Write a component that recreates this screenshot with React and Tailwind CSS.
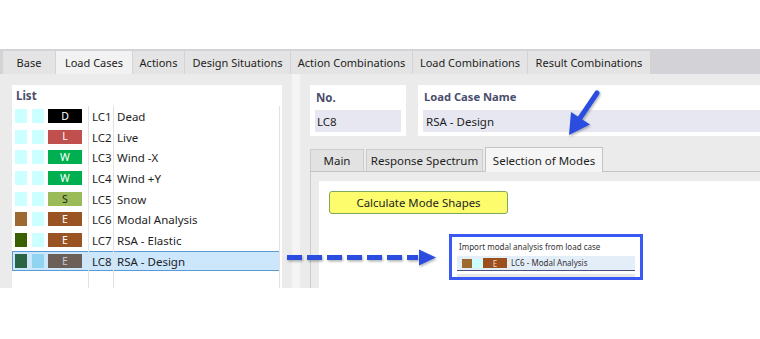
import React from "react";

const font = { fontFamily: '"Noto Sans", "Open Sans", sans-serif' };

const mainTabs = [
  { label: "Base", w: "w-[52px]" },
  { label: "Load Cases", w: "w-[76px]", active: true },
  { label: "Actions", w: "w-[51px]" },
  { label: "Design Situations", w: "w-[105px]" },
  { label: "Action Combinations", w: "w-[121px]" },
  { label: "Load Combinations", w: "w-[114px]" },
  { label: "Result Combinations", w: "w-[122px]" },
];

const loadCases = [
  { s1: "bg-[#ccffff]", s2: "bg-[#ccffff]", code: "D", box: "bg-[#000000] text-white", no: "LC1", name: "Dead" },
  { s1: "bg-[#ccffff]", s2: "bg-[#ccffff]", code: "L", box: "bg-[#c0504d] text-white", no: "LC2", name: "Live" },
  { s1: "bg-[#ccffff]", s2: "bg-[#ccffff]", code: "W", box: "bg-[#00b050] text-white", no: "LC3", name: "Wind -X" },
  { s1: "bg-[#ccffff]", s2: "bg-[#ccffff]", code: "W", box: "bg-[#00b050] text-white", no: "LC4", name: "Wind +Y" },
  { s1: "bg-[#ccffff]", s2: "bg-[#ccffff]", code: "S", box: "bg-[#9bbb59] text-[#222]", no: "LC5", name: "Snow" },
  { s1: "bg-[#9c6a30]", s2: "bg-[#ccffff]", code: "E", box: "bg-[#9a5424] text-white", no: "LC6", name: "Modal Analysis" },
  { s1: "bg-[#386000]", s2: "bg-[#ccffff]", code: "E", box: "bg-[#9a5424] text-white", no: "LC7", name: "RSA - Elastic" },
  { s1: "bg-[#2b6444]", s2: "bg-[#90d4f0]", code: "E", box: "bg-[#6b5f57] text-[#c4c6dc]", no: "LC8", name: "RSA - Design", selected: true },
];

function ListRow({ lc }) {
  return (
    <div
      className={`flex h-[20.7px] items-stretch ${
        lc.selected ? "bg-[#cce6fb] ring-1 ring-inset ring-[#5b9bd5]" : ""
      }`}
    >
      <div className="w-[77px] flex items-center pl-[3px] border-r border-[#e2e2e2]">
        <span className={`w-[12px] h-[14px] ${lc.s1}`} />
        <span className={`w-[12px] h-[14px] ml-[5px] ${lc.s2}`} />
        <span
          className={`w-[34px] h-[14px] ml-[4px] flex items-center justify-center text-[10.5px] leading-none ${lc.box}`}
        >
          {lc.code}
        </span>
      </div>
      <div className="w-[25px] flex items-center pl-[3px] pt-[1px] border-r border-[#e2e2e2] text-[11.5px] text-[#1e1e1e] whitespace-nowrap">
        {lc.no}
      </div>
      <div className="flex-1 flex items-center pl-[3px] pt-[1px] border-r border-[#e2e2e2] text-[11.5px] text-[#1e1e1e] whitespace-nowrap">
        {lc.name}
      </div>
    </div>
  );
}

function Annotations() {
  return (
    <svg
      className="absolute left-0 top-0 pointer-events-none"
      width="760"
      height="339"
      viewBox="0 0 760 339"
    >
      <defs>
        <filter id="sh" x="-20%" y="-20%" width="140%" height="140%">
          <feDropShadow dx="1" dy="1.5" stdDeviation="1.2" floodColor="#000" floodOpacity="0.3" />
        </filter>
      </defs>
      <g filter="url(#sh)">
        <line x1="597" y1="93" x2="578" y2="121" stroke="#2c4ee0" strokeWidth="5" strokeLinecap="round" />
        <polygon points="569,135 571,112 590,124.5" fill="#2c4ee0" />
      </g>
      <g filter="url(#sh)">
        <line x1="287" y1="257.5" x2="418" y2="257.5" stroke="#2c4ee0" strokeWidth="5" strokeDasharray="15 5" />
        <polygon points="419,249.5 436,257.5 419,265.5" fill="#2c4ee0" />
      </g>
    </svg>
  );
}

export default function App() {
  return (
    <div className="relative w-[760px] h-[339px] bg-white overflow-hidden" style={font}>
      <div className="pt-[49px]">
        <div className="h-[239px] flex flex-col">
          {/* main tab bar */}
          <div className="h-[25px] bg-[#d2d2d7] flex items-end pl-[3px] gap-[1px]">
            {mainTabs.map((t) => (
              <div
                key={t.label}
                className={`${t.w} h-[23px] pt-[2px] flex items-center justify-center text-[11px] text-[#1e1e1e] whitespace-nowrap ${
                  t.active ? "bg-[#f2f2f2]" : "bg-[#e4e4e4]"
                }`}
              >
                {t.label}
              </div>
            ))}
          </div>

          {/* body */}
          <div className="flex-1 flex bg-[#ebebeb]">
            {/* list panel */}
            <div className="w-[282px] pl-[12px] pt-[11px] flex">
              <div className="flex-1 bg-white flex flex-col pr-[2px]">
                <div className="h-[20.7px] flex items-center pl-[4px] text-[11.5px] font-bold text-[#4a4e6c]">
                  List
                </div>
                {loadCases.map((lc) => (
                  <ListRow key={lc.no} lc={lc} />
                ))}
                <div className="flex-1 flex">
                  <div className="w-[77px] border-r border-[#e2e2e2]" />
                  <div className="w-[25px] border-r border-[#e2e2e2]" />
                  <div className="flex-1 border-r border-[#e2e2e2]" />
                </div>
              </div>
            </div>

            {/* splitter */}
            <div className="w-[28px] flex pl-[10px]">
              <div className="w-[8px] bg-[#f4f4f4]" />
            </div>

            {/* right panel */}
            <div className="flex-1 flex flex-col pt-[11px]">
              <div className="flex gap-[12px] h-[51px]">
                <div className="w-[96px] bg-white flex flex-col px-[5px]">
                  <div className="h-[25px] flex items-center pl-[1px] text-[11.5px] font-bold text-[#4a4e6c]">
                    No.
                  </div>
                  <div className="h-[22px] bg-[#e7e7f1] flex items-center pl-[2px] pt-[1px] text-[11.5px] text-[#1e1e1e]">
                    LC8
                  </div>
                </div>
                <div className="flex-1 bg-white flex flex-col pl-[5px]">
                  <div className="h-[25px] flex items-center pl-[1px] text-[11.2px] font-bold text-[#4a4e6c]">
                    Load Case Name
                  </div>
                  <div className="h-[22px] bg-[#e7e7f1] flex items-center pl-[3px] pt-[1px] text-[11.5px] text-[#1e1e1e]">
                    RSA - Design
                  </div>
                </div>
              </div>

              {/* sub tabs */}
              <div className="mt-[11px] h-[25px] flex items-end gap-[2px] border-b border-[#c4c4c4]">
                <div className="w-[54px] h-[22px] pt-[1px] bg-[#e2e2e2] border border-b-0 border-[#cdcdcd] flex items-center justify-center text-[11.5px] text-[#1e1e1e] whitespace-nowrap">
                  Main
                </div>
                <div className="w-[117px] h-[22px] pt-[1px] bg-[#e2e2e2] border border-b-0 border-[#cdcdcd] flex items-center justify-center text-[11.5px] text-[#1e1e1e] whitespace-nowrap">
                  Response Spectrum
                </div>
                <div className="w-[118px] h-[25px] -mb-[1px] pt-[1px] bg-[#f5f5f5] border border-b-0 border-[#c4c4c4] flex items-center justify-center text-[11.5px] text-[#1e1e1e] whitespace-nowrap">
                  Selection of Modes
                </div>
              </div>

              <div className="flex-1 flex flex-col border-l border-[#cdcdcd] pl-[8px] pt-[9px] bg-[#ebebeb]">
                <div className="flex-1 bg-white pl-[10px] pt-[10px] flex flex-col">
                  <div className="w-[179px] h-[23px] rounded-[3px] border border-[#7fa85c] bg-[#fcfc6c] flex items-center justify-center pt-[1px] text-[11.4px] text-[#1e1e1e]">
                    Calculate Mode Shapes
                  </div>

                  <div className="ml-[120px] mt-[20px] w-[194px] h-[46px] border-[3px] border-[#3958f4] bg-white px-[5px] pt-[3px]">
                    <div className="h-[13px] flex items-center pl-[2px] text-[8px] text-[#333] whitespace-nowrap">
                      Import modal analysis from load case
                    </div>
                    <div className="mt-[3px] h-[15px] bg-[#e3eef9] border-b-[1.5px] border-[#4b5080] flex items-center pl-[5px]">
                      <span className="w-[10px] h-[9px] bg-[#9c6a30]" />
                      <span className="w-[11px] h-[9px] bg-[#ccffff]" />
                      <span className="w-[24px] h-[10px] bg-[#9a4f1d] flex items-end justify-center text-[8px] leading-none text-[#f4d8c8]">
                        E
                      </span>
                      <span className="ml-[4px] text-[8px] text-[#333] whitespace-nowrap">LC6 - Modal Analysis</span>
                    </div>
                    <div className="mt-[3px] h-[3px] bg-[#e8e8e8]" />
                  </div>
                </div>
              </div>
            </div>
          </div>
        </div>
      </div>
      <Annotations />
    </div>
  );
}
